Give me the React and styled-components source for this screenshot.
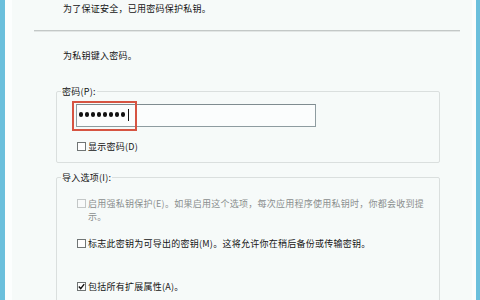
import React from 'react'
import styled, { createGlobalStyle } from 'styled-components'

const GlobalStyle = createGlobalStyle`
   html, body {
      margin: 0;
      padding: 0;
      background: #f6faf9;
   }
   body {
      font-family: "Noto Sans CJK SC", "Noto Sans", sans-serif;
      font-size: 9px;
      line-height: 13px;
      letter-spacing: 0.25px;
      color: #141414;
   }
`

const Window = styled.div`
   display: flex;
   width: 480px;
   height: 300px;
   overflow: hidden;
   background: #f6faf9;
`

const Frame = styled.div`
   flex: 0 0 ${p => p.$w}px;
   background: ${p => p.$color};
`

const Content = styled.div`
   flex: 1;
   min-width: 0;
   padding-top: 2px;
`

const Text = styled.div`
   margin-left: ${p => p.$indent || 0}px;
   margin-top: ${p => p.$top || 0}px;
   white-space: nowrap;
`

const Divider = styled.div`
   margin: 15px 0 0 22px;
   width: 426px;
   height: 1px;
   background: #c3c8c7;
   box-shadow: 0 1px 0 #e2e6e5;
`

const Body = styled.div`
   padding-left: 44px;
   display: flex;
   flex-direction: column;
`

const Group = styled.fieldset`
   box-sizing: border-box;
   width: 384px;
   margin: ${p => p.$top}px 0 0 0;
   padding: 0 0 ${p => p.$bottom || 0}px 4px;
   border: 1px solid #dadfde;
   border-radius: 2px;
   min-width: 0;
`

const Legend = styled.legend`
   padding: 0 1px;
   line-height: 13px;
`

const GroupInner = styled.div`
   padding-left: 15px;
   display: flex;
   flex-direction: column;
`

const InputWrap = styled.div`
   position: relative;
   margin-top: 6px;
   width: 240px;
`

const PasswordBox = styled.div`
   box-sizing: border-box;
   width: 240px;
   height: 23px;
   border: 1px solid #8e9ca0;
   border-top-color: #7f8c90;
   background: #fbfdfd;
   display: flex;
   align-items: center;
   padding-left: 2px;
   gap: 1.6px;
`

const Dot = styled.span`
   width: 4.4px;
   height: 4.4px;
   border-radius: 50%;
   background: #111;
   margin-top: -2px;
`

const Caret = styled.span`
   width: 1px;
   height: 12px;
   background: #111;
   margin-left: 1.5px;
   margin-top: -2px;
`

const Highlight = styled.div`
   position: absolute;
   left: -4px;
   top: -3px;
   width: 65px;
   height: 30px;
   box-sizing: border-box;
   border: 2px solid #d65442;
   pointer-events: none;
`

const Option = styled.div`
   display: flex;
   align-items: flex-start;
   margin-top: ${p => p.$top}px;
   margin-left: 1px;
   color: ${p => (p.$disabled ? '#8a8e8e' : '#141414')};
`

const Box = styled.span`
   flex: 0 0 auto;
   box-sizing: border-box;
   width: 9px;
   height: 9px;
   margin-top: 2px;
   margin-right: 2px;
   border: 1px solid ${p => (p.$disabled ? '#c3c7c7' : '#707575')};
   background: ${p => (p.$disabled ? '#f8fafa' : '#fefefe')};
   display: flex;
   align-items: center;
   justify-content: center;
`

const Label = styled.span`
   width: ${p => (p.$wrap ? '347px' : 'auto')};
   white-space: ${p => (p.$wrap ? 'normal' : 'nowrap')};
`

const Check = ({ checked, disabled }) => (
   <Box $disabled={disabled}>
      {checked && (
         <svg width="7" height="7" viewBox="0 0 7 7">
            <path d="M0.8 3.6 L2.7 5.6 L6.2 1.1" fill="none" stroke="#111" strokeWidth="1.4" />
         </svg>
      )}
   </Box>
)

const App = () => {
   return (
      <>
         <GlobalStyle />
         <Window>
            <Frame $w={5} $color="#6bbfdc" />
            <Frame $w={7} $color="#fcfefe" />
            <Content>
               <Text $indent={51}>为了保证安全，已用密码保护私钥。</Text>
               <Divider />
               <Body>
                  <Text $indent={7} $top={18}>为私钥键入密码。</Text>

                  <Group $top={23} $bottom={9}>
                     <Legend>密码(P):</Legend>
                     <GroupInner>
                        <InputWrap>
                           <PasswordBox>
                              {Array.from({ length: 8 }).map((_, i) => (
                                 <Dot key={i} />
                              ))}
                              <Caret />
                           </PasswordBox>
                           <Highlight />
                        </InputWrap>
                        <Option $top={13}>
                           <Check />
                           <Label>显示密码(D)</Label>
                        </Option>
                     </GroupInner>
                  </Group>

                  <Group $top={8} $bottom={20}>
                     <Legend>导入选项(I):</Legend>
                     <GroupInner>
                        <Option $top={13} $disabled>
                           <Check disabled />
                           <Label $wrap>
                              启用强私钥保护(E)。如果启用这个选项，每次应用程序使用私钥时，你都会收到提示。
                           </Label>
                        </Option>
                        <Option $top={14}>
                           <Check />
                           <Label>标志此密钥为可导出的密钥(M)。这将允许你在稍后备份或传输密钥。</Label>
                        </Option>
                        <Option $top={30}>
                           <Check checked />
                           <Label>包括所有扩展属性(A)。</Label>
                        </Option>
                     </GroupInner>
                  </Group>
               </Body>
            </Content>
            <Frame $w={4} $color="#fbfdfd" />
            <Frame $w={4} $color="#6bbfdc" />
         </Window>
      </>
   )
}

export default App
